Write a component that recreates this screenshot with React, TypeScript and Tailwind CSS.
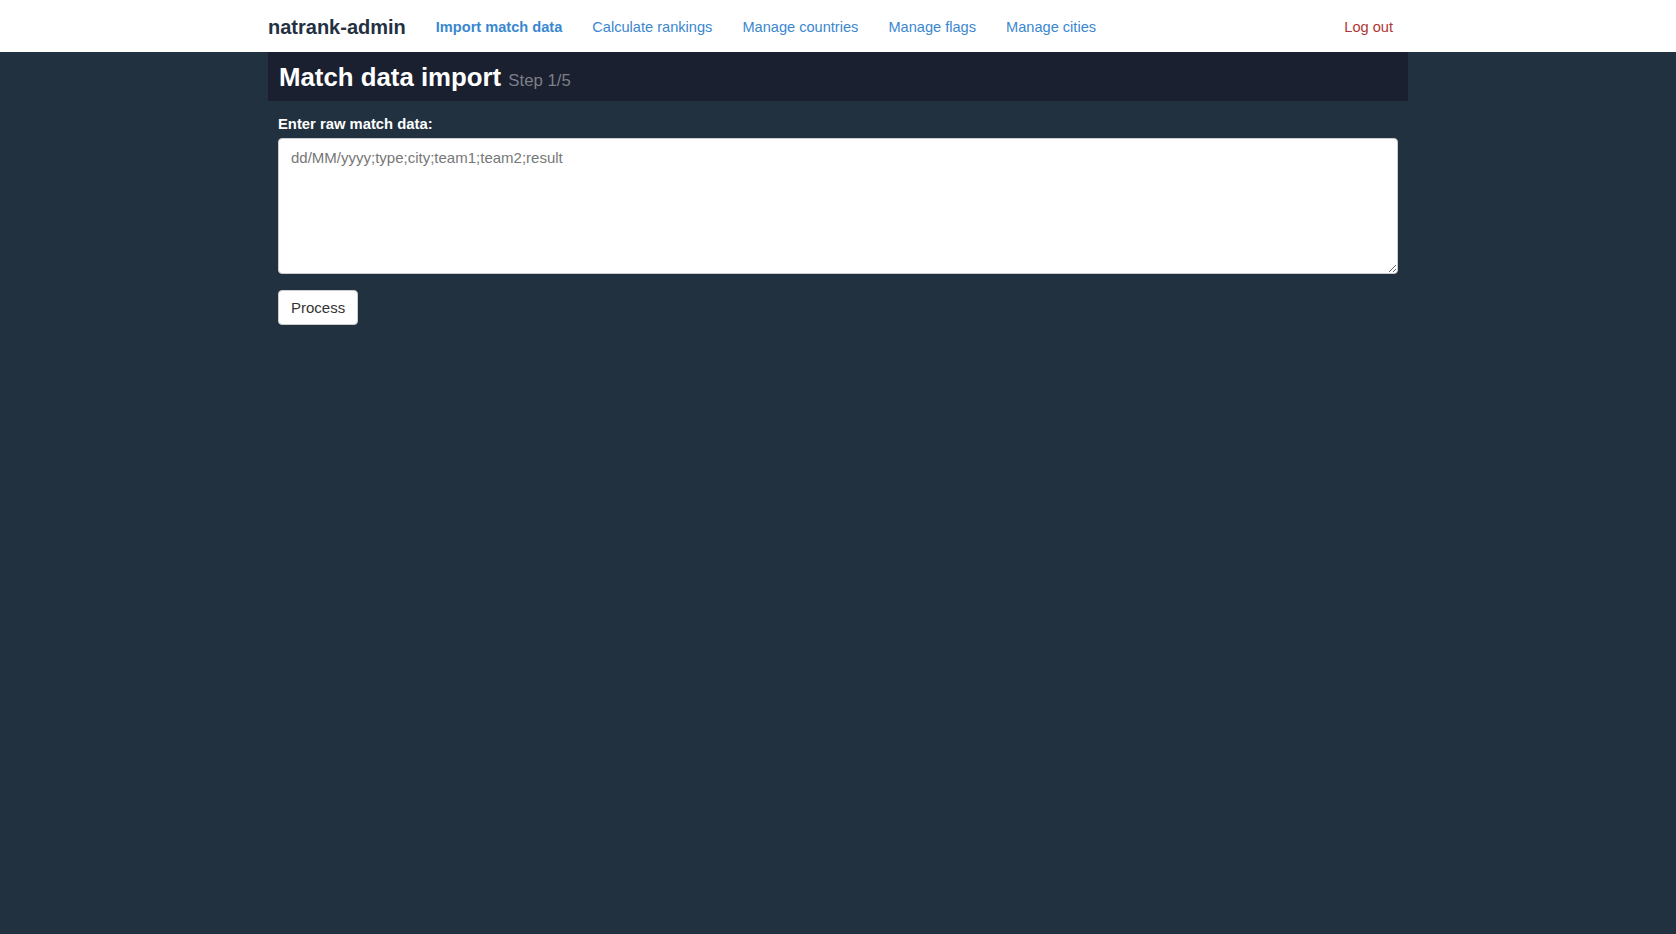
import React, { useState } from 'react';

const navLinks = [
  { label: 'Import match data', active: true },
  { label: 'Calculate rankings', active: false },
  { label: 'Manage countries', active: false },
  { label: 'Manage flags', active: false },
  { label: 'Manage cities', active: false },
];

const App: React.FC = () => {
  const [raw, setRaw] = useState('');

  return (
    <div className="min-h-screen bg-[#223140] font-['Liberation_Sans',Arial,sans-serif] text-[15px]">
      <nav className="bg-white h-[52px]">
        <div className="w-[1170px] mx-auto px-[15px] h-full flex items-center pt-[2px]">
          <a href="#" className="text-[20px] font-bold text-[#243142] mr-[15px] leading-none">
            natrank-admin
          </a>
          <ul className="flex items-center">
            {navLinks.map((link) => (
              <li key={link.label}>
                <a
                  href="#"
                  className={`px-[15px] text-[14.6px] text-[#3a87cf] ${link.active ? 'font-bold' : ''}`}
                >
                  {link.label}
                </a>
              </li>
            ))}
          </ul>
          <a href="#" className="ml-auto mr-[15px] mt-[1px] text-[14.6px] text-[#b03535]">
            Log out
          </a>
        </div>
      </nav>

      <div className="w-[1170px] mx-auto px-[15px]">
        <div className="bg-[#1b2030] h-[49px] px-[11px] flex items-end pb-[10px]">
          <h2 className="text-[25.8px] font-bold text-white leading-none">
            Match data import <small className="text-[16.8px] font-normal text-[#7b7f87]">Step 1/5</small>
          </h2>
        </div>

        <div className="px-[10px] pt-[12px]">
          <label className="block text-[14.8px] font-bold text-white mb-[3px]">Enter raw match data:</label>
          <textarea
            value={raw}
            onChange={(e) => setRaw(e.target.value)}
            placeholder="dd/MM/yyyy;type;city;team1;team2;result"
            className="block w-full h-[136px] bg-white rounded-[4px] border border-[#ccc] px-[12px] py-[8px] text-[15px] text-[#333] placeholder:text-[#777] outline-none"
          />
          <button className="mt-[16px] h-[35px] px-[12px] pt-[2px] bg-white border border-[#ccc] rounded-[4px] text-[15px] text-[#333]">
            Process
          </button>
        </div>
      </div>
    </div>
  );
};

export default App;
